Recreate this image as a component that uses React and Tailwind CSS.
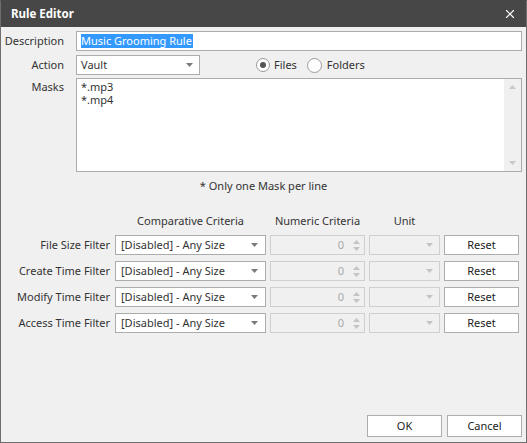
import { X } from "lucide-react";

const Caret = ({ color = "#7a7a7a" }) => (
  <svg width="7" height="4" viewBox="0 0 7 4">
    <path d="M0 0h7L3.5 4z" fill={color} />
  </svg>
);

const Spin = () => (
  <div className="flex flex-col items-center gap-[3px] w-[12px]">
    <svg width="7" height="4" viewBox="0 0 7 4">
      <path d="M0 4h7L3.5 0z" fill="#c4c4c4" />
    </svg>
    <svg width="7" height="4" viewBox="0 0 7 4">
      <path d="M0 0h7L3.5 4z" fill="#c4c4c4" />
    </svg>
  </div>
);

const filters = ["File Size Filter", "Create Time Filter", "Modify Time Filter", "Access Time Filter"];

function FilterRow({ label }) {
  return (
    <>
      <div className="text-right h-[20px] leading-[20px] pr-[1px]">{label}</div>
      <div className="h-[20px] bg-white border border-[#acacac] flex items-center justify-between pl-[5px] pr-[7px]">
        <span>[Disabled] - Any Size</span>
        <Caret />
      </div>
      <div className="h-[20px] border border-[#cfcfcf] flex items-center justify-end pr-[2px] text-[#a8a8a8]">
        <span className="mr-[6px]">0</span>
        <Spin />
      </div>
      <div className="h-[20px] border border-[#cfcfcf] flex items-center justify-end pr-[6px]">
        <Caret color="#c4c4c4" />
      </div>
      <button className="h-[20px] bg-white border border-[#adadad] text-[#222] leading-[18px]">Reset</button>
    </>
  );
}

export default function App() {
  return (
    <div className="w-[527px] h-[443px] bg-[#f0f0f0] border border-[#6e6e6e] border-t-[#474747] flex flex-col text-[11px] leading-[16px] text-[#333] font-['Noto_Sans',sans-serif] select-none">
      <div className="h-[26px] shrink-0 bg-[#474747] flex items-center justify-between pl-[10px] pr-[9px]">
        <span className="text-white font-bold text-[11.5px]">Rule Editor</span>
        <X size={14} color="#ffffff" strokeWidth={2} />
      </div>

      <div className="flex items-center mt-[4px]">
        <div className="w-[63px] text-right">Description</div>
        <div className="ml-[12px] w-[446px] h-[20px] bg-white border border-[#acacac] flex items-center pl-[4px]">
          <span className="bg-[#3399ff] text-white leading-[14px] pr-[1px]">Music Grooming Rule</span>
        </div>
      </div>

      <div className="flex items-center mt-[4px]">
        <div className="w-[63px] text-right">Action</div>
        <div className="ml-[12px] w-[124px] h-[20px] bg-white border border-[#acacac] flex items-center justify-between pl-[4px] pr-[6px]">
          <span>Vault</span>
          <Caret />
        </div>
        <div className="ml-[56px] flex items-center">
          <span className="w-[14px] h-[14px] rounded-full border border-[#9a9a9a] bg-white flex items-center justify-center">
            <span className="w-[6px] h-[6px] rounded-full bg-[#555]" />
          </span>
          <span className="ml-[4px]">Files</span>
          <span className="ml-[10px] w-[15px] h-[15px] rounded-full border border-[#9a9a9a] bg-white" />
          <span className="ml-[5px]">Folders</span>
        </div>
      </div>

      <div className="flex mt-[3px]">
        <div className="w-[63px] text-right pt-[1px]">Masks</div>
        <div className="ml-[12px] w-[446px] h-[94px] bg-white border border-[#acacac] flex">
          <div className="flex-1 pl-[4px] pt-[1px] leading-[13px]">
            <div>*.mp3</div>
            <div>*.mp4</div>
          </div>
          <div className="w-[17px] bg-[#f0f0f0] flex flex-col items-center justify-between py-[6px]">
            <svg width="7" height="4" viewBox="0 0 7 4">
              <path d="M0 4h7L3.5 0z" fill="#c8c8c8" />
            </svg>
            <svg width="7" height="4" viewBox="0 0 7 4">
              <path d="M0 0h7L3.5 4z" fill="#c8c8c8" />
            </svg>
          </div>
        </div>
      </div>

      <div className="mt-[6px] text-center">* Only one Mask per line</div>

      <div className="mt-[19px] grid grid-cols-[110px_151px_95px_71px_75px] gap-x-[4px] gap-y-[6px] items-center">
        <div />
        <div className="text-center">Comparative Criteria</div>
        <div className="text-center">Numeric Criteria</div>
        <div className="text-center">Unit</div>
        <div />
        {filters.map((f) => (
          <FilterRow key={f} label={f} />
        ))}
      </div>

      <div className="mt-auto mb-[5px] flex justify-end gap-[5px] pr-[4px]">
        <button className="w-[75px] h-[22px] bg-white border border-[#adadad] text-[#222]">OK</button>
        <button className="w-[75px] h-[22px] bg-white border border-[#adadad] text-[#222]">Cancel</button>
      </div>
    </div>
  );
}
